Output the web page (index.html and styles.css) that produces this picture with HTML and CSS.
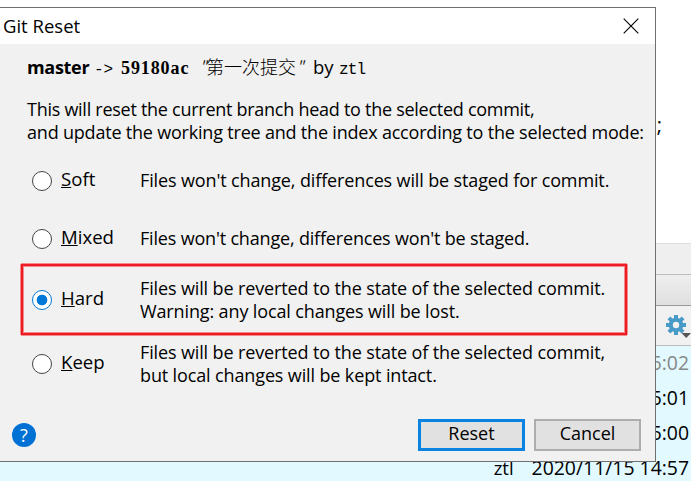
FILE: index.html
```html
<!DOCTYPE html>
<html lang="en">
<head>
<meta charset="utf-8">
<title>Git Reset</title>
<link rel="stylesheet" href="styles.css">
</head>
<body>
<div class="app">
  <div class="editor">;</div>
  <div class="strip"></div>
  <div class="panel-head"></div>
  <div class="toolbar">
    <svg class="gear" width="26" height="26" viewBox="0 0 26 26">
      <g fill="#489bc7">
        <path d="M8 0h4v20H8zM0 8h20v4H0z"/>
        <path d="M8 0h4v20H8zM0 8h20v4H0z" transform="rotate(45 10 10)"/>
        <circle cx="10" cy="10" r="7.3"/>
      </g>
      <circle cx="10" cy="10" r="3.2" fill="#f1f1f1"/>
      <path d="M15.500 18h9.500l-4.750 5z" fill="#555"/>
    </svg>
  </div>
  <div class="log">
    <div class="log-row muted"><span>5:02</span></div>
    <div class="log-row"><span>5:01</span></div>
    <div class="log-row"><span>5:00</span></div>
    <div class="log-row"><span class="author">ztl</span><span>2020/11/15 14:57</span></div>
  </div>
</div>

<div class="dialog">
  <div class="titlebar">
    <span class="title">Git Reset</span>
    <svg class="close" width="16" height="16" viewBox="0 0 16 16"><path d="M.7.7l14.6 14.6M15.3.7L.7 15.3" stroke="#000" stroke-width="1.1"/></svg>
  </div>
  <div class="content">
    <div class="summary"><b class="branch">master</b><span class="mono arrow">-&gt;</span><b class="hash">59180ac</b><span class="message"><i>"</i>第一次提交<i>"</i></span><span class="by">by</span><span class="mono">ztl</span></div>
    <div class="intro"><div class="intro-a">This will reset the current branch head to the selected commit,</div><div class="intro-b">and update the working tree and the index according to the selected mode:</div></div>
    <div class="option soft"><span class="radio"></span><span class="name"><u>S</u>oft</span><div class="desc">Files won't change, differences will be staged for commit.</div></div>
    <div class="option mixed"><span class="radio"></span><span class="name"><u>M</u>ixed</span><div class="desc">Files won't change, differences won't be staged.</div></div>
    <div class="option hard"><span class="radio checked"></span><span class="name"><u>H</u>ard</span><div class="desc">Files will be reverted to the state of the selected commit.<br>Warning: any local changes will be lost.</div></div>
    <div class="option keep"><span class="radio"></span><span class="name"><u>K</u>eep</span><div class="desc">Files will be reverted to the state of the selected commit,<br>but local changes will be kept intact.</div></div>
  </div>
  <div class="footer">
    <span class="help">?</span>
    <button class="btn primary">Reset</button>
    <button class="btn">Cancel</button>
  </div>
</div>
<div class="highlight"></div>
</body>
</html>
```
FILE: styles.css
```css
*, *::after { box-sizing: border-box; }
body {
  margin: 0;
  width: 691px;
  height: 481px;
  overflow: hidden;
  position: relative;
  background: #fff;
  color: #000;
  font: 18px/23px "Open Sans", "Noto Sans", sans-serif;
}
.app { height: 481px; display: flex; flex-direction: column; }
.editor { height: 243px; padding: 113px 29px 0 0; text-align: right; font-size: 20px; }
.strip { height: 31px; background: #efefef; border-top: 1px solid #ddd; }
.panel-head { height: 31px; background: linear-gradient(#eee, #dfdfdf); border-top: 1px solid #bdbdbd; }
.toolbar { height: 41px; background: #f1f1f1; border-top: 1px solid #999; border-bottom: 1px solid #bbb; padding: 9px 0 0 666px; }
.gear { display: block; }
.log { height: 135px; background: #e1f9ff; }
.log-row { height: 35px; padding-right: 2px; display: flex; justify-content: flex-end; gap: 18px; font-size: 19.4px; line-height: 34px; white-space: nowrap; }
.author { font-size: 18.5px; }
.muted { color: #888; }

.dialog {
  position: absolute;
  left: -1px;
  top: 7px;
  width: 657px;
  height: 455px;
  background: #f1f1f1;
  border: 1px solid #6f6f6f;
  display: flex;
  flex-direction: column;
  white-space: nowrap;
}
.titlebar { height: 36px; background: #fff; display: flex; justify-content: space-between; align-items: center; padding: 0 16px 0 3px; }
.title { font-size: 18.5px; margin-top: -2px; }
.content { height: 360px; padding: 11px 0 0 27px; }
.summary { height: 22px; display: flex; align-items: baseline; line-height: 22px; }
.branch { width: 67px; letter-spacing: -0.3px; }
.mono { font: 16px "Liberation Mono", monospace; letter-spacing: -0.8px; }
.arrow { width: 27px; letter-spacing: 0; }
.hash { width: 78px; font-family: "Liberation Serif", serif; letter-spacing: 0.9px; }
.message { width: 114px; font-family: "Noto Sans CJK SC", sans-serif; font-weight: 300; }
.message i { letter-spacing: -0.5px; }
.by { width: 26px; font-size: 18.5px; }
.intro { margin-top: 21px; height: 46px; }
.intro-a { letter-spacing: -0.27px; }
.intro-b { letter-spacing: -0.2px; }
.option { display: grid; grid-template-columns: 34px 79px 1fr; align-items: center; }
.soft { height: 58px; margin-top: 8px; }
.mixed { height: 58px; }
.hard, .keep { height: 64px; }
.desc { letter-spacing: -0.13px; }
.mixed .desc { letter-spacing: -0.18px; }
.soft .desc, .mixed .desc { margin-top: -1px; }
.radio { width: 20px; height: 20px; margin-left: 5px; border: 1.5px solid #444; border-radius: 50%; background: #fff; }
.checked { border-color: #0078d7; background: radial-gradient(circle, #0078d7 5px, #fff 5.7px); }
.name { font-size: 18.6px; margin-top: -6px; }
.name u { text-decoration-thickness: 1px; text-underline-offset: 1px; text-decoration-skip-ink: none; }
.footer { display: flex; align-items: flex-start; padding: 15px 14px 0 12px; }
.help { width: 24px; height: 24px; margin-top: 4px; border-radius: 50%; background: #0071d4; color: #fff; text-align: center; line-height: 24px; }
.btn { width: 107px; height: 32px; padding: 0 0 3px; background: #e1e1e1; border: 2px solid #adadad; border-radius: 0; color: #000; font: inherit; line-height: 23px; }
.primary { margin: 0 9px 0 382px; border: 3px solid #0a84e0; }
.highlight { position: absolute; left: 20px; top: 263px; width: 608px; height: 73px; border: 1px solid #f58a8d; border-radius: 2px; }
.highlight::after { content: ""; display: block; height: 71px; border: 2px solid #ed1c24; box-shadow: inset 0 0 0 1px #f58a8d; }
```
